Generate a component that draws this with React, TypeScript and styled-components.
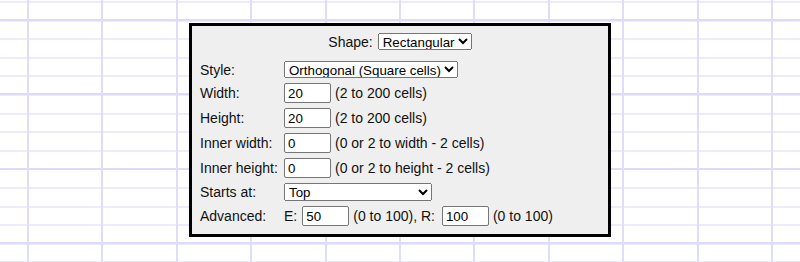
import styled, { createGlobalStyle } from 'styled-components';

const GlobalStyle = createGlobalStyle`
  html, body {
    margin: 0;
    padding: 0;
  }
  body {
    height: 262px;
    font-family: 'Liberation Sans', Arial, sans-serif;
    background-color: #ffffff;
    background-image:
      repeating-linear-gradient(
        to right,
        transparent 0 27px,
        #e0ddfb 27px 29px,
        transparent 29px 74.4px
      ),
      repeating-linear-gradient(
        to bottom,
        transparent 0 19px,
        #dedbfa 19px 21px,
        transparent 21px 74.4px
      ),
      repeating-linear-gradient(
        to bottom,
        transparent 0 1px,
        #eceafd 1px 3px,
        transparent 3px 18.6px
      );
  }
`;

const Page = styled.div`
  padding-top: 23px;
`;

const Panel = styled.div`
  width: 416px;
  margin: 0 auto;
  border: 3px solid #000;
  background: #efefef;
  padding: 7px 0 8px;
  color: #111;
  font-size: 14px;
`;

const ShapeRow = styled.div`
  display: flex;
  justify-content: center;
  align-items: center;
  gap: 5px;
  margin-bottom: 11px;
`;

const Form = styled.div`
  display: grid;
  grid-template-columns: 80px 1fr;
  column-gap: 4px;
  row-gap: 5px;
  padding-left: 8px;
`;

const Label = styled.div`
  display: flex;
  align-items: center;
  white-space: nowrap;
`;

const Field = styled.div`
  display: flex;
  align-items: center;
  gap: 4px;
  white-space: nowrap;
`;

const Hint = styled.span<{ $trail?: number }>`
  margin-right: ${(p) => p.$trail ?? 0}px;
`;

const Select = styled.select<{ $w?: number; $h?: number }>`
  width: ${(p) => (p.$w ? `${p.$w}px` : 'auto')};
  height: ${(p) => p.$h ?? 17}px;
  font-family: 'Liberation Sans', Arial, sans-serif;
  font-size: 13.333px;
  color: #000;
  margin: 0;
`;

const NumInput = styled.input`
  box-sizing: border-box;
  width: 47px;
  height: 20px;
  margin: 0;
  padding: 0 3px;
  border: 1px solid #767676;
  border-radius: 2px;
  background: #fff;
  font-family: 'Liberation Sans', Arial, sans-serif;
  font-size: 13.333px;
  color: #000;
`;

export default function App() {
  return (
    <>
      <GlobalStyle />
      <Page>
        <Panel>
          <ShapeRow>
            <span>Shape:</span>
            <Select defaultValue="rect">
              <option value="rect">Rectangular</option>
              <option value="circ">Circular</option>
              <option value="tri">Triangular</option>
            </Select>
          </ShapeRow>
          <Form>
            <Label>Style:</Label>
            <Field>
              <Select defaultValue="orth">
                <option value="orth">Orthogonal (Square cells)</option>
                <option value="sigma">Sigma (Hexagonal cells)</option>
                <option value="delta">Delta (Triangle cells)</option>
              </Select>
            </Field>

            <Label>Width:</Label>
            <Field>
              <NumInput defaultValue="20" />
              <span>(2 to 200 cells)</span>
            </Field>

            <Label>Height:</Label>
            <Field>
              <NumInput defaultValue="20" />
              <span>(2 to 200 cells)</span>
            </Field>

            <Label>Inner width:</Label>
            <Field>
              <NumInput defaultValue="0" />
              <span>(0 or 2 to width - 2 cells)</span>
            </Field>

            <Label>Inner height:</Label>
            <Field>
              <NumInput defaultValue="0" />
              <span>(0 or 2 to height - 2 cells)</span>
            </Field>

            <Label>Starts at:</Label>
            <Field>
              <Select $w={148} $h={18} defaultValue="top">
                <option value="top">Top</option>
                <option value="bottom">Bottom</option>
                <option value="random">Random point on edge</option>
              </Select>
            </Field>

            <Label>Advanced:</Label>
            <Field>
              <Hint $trail={1}>E:</Hint>
              <NumInput defaultValue="50" />
              <Hint $trail={3}>(0 to 100), R:</Hint>
              <NumInput defaultValue="100" />
              <span>(0 to 100)</span>
            </Field>
          </Form>
        </Panel>
      </Page>
    </>
  );
}
